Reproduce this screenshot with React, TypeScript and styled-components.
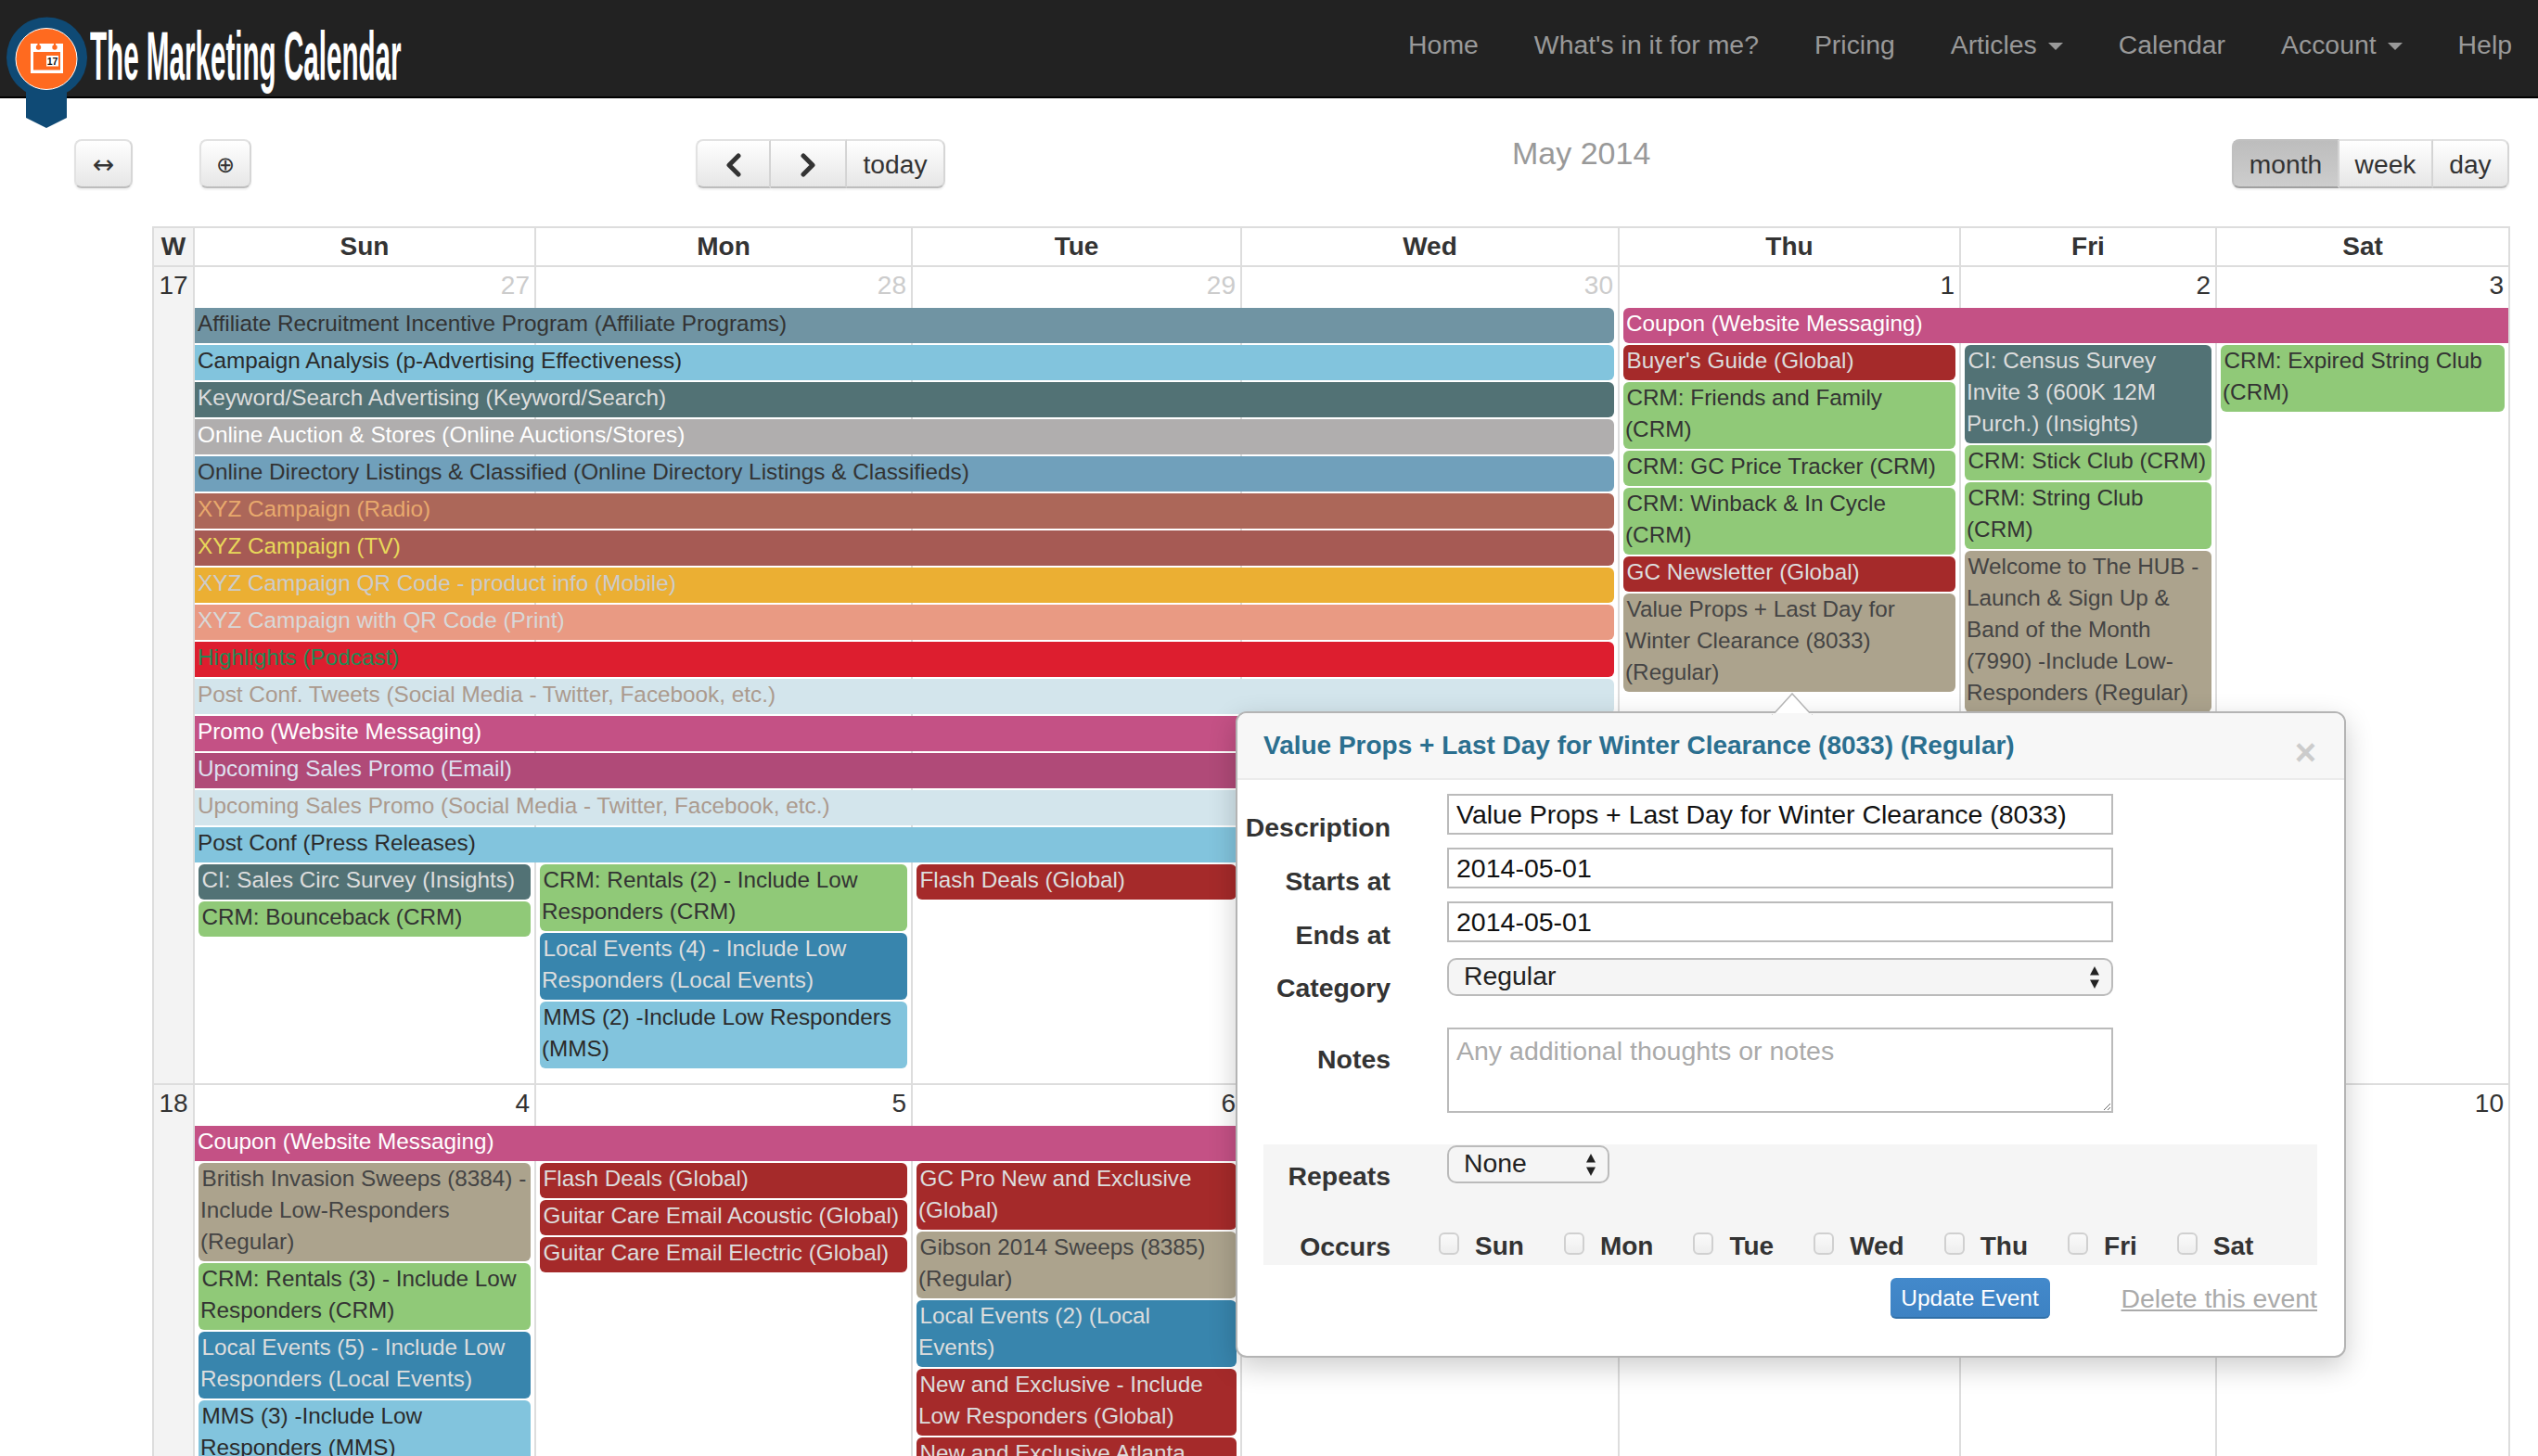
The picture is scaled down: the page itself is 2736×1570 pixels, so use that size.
import React from "react";
import styled, { createGlobalStyle, css } from "styled-components";

const GlobalStyle = createGlobalStyle`
  html, body {
    margin: 0;
    padding: 0;
    background: #fff;
  }
  body {
    font-family: "Liberation Sans", Arial, sans-serif;
    font-size: 28px;
    color: #333;
  }
`;

const COLUMNS = "44px 368px 406px 355px 407px 368px 276px 316px";

const KINDS = {
  affiliate: { bg: "#7094a3", fg: "#333" },
  analysis: { bg: "#82c4dd", fg: "#2b2b2b" },
  insights: { bg: "#527275", fg: "#ddd" },
  auction: { bg: "#b0aeae", fg: "#fff" },
  directory: { bg: "#70a0bb", fg: "#333" },
  radio: { bg: "#ac6759", fg: "#e8a96d" },
  tv: { bg: "#a65a54", fg: "#e8d85a" },
  mobile: { bg: "#ebaf33", fg: "#ccc" },
  print: { bg: "#e99a83", fg: "#d8d8d8" },
  podcast: { bg: "#dd1e2f", fg: "#1e8a55" },
  social: { bg: "#d3e5ec", fg: "#ab9a8e" },
  website: { bg: "#c45185", fg: "#fff" },
  email: { bg: "#b04a78", fg: "#dde0f0" },
  crm: { bg: "#90c978", fg: "#333" },
  global: { bg: "#a52a2a", fg: "#ddd" },
  local: { bg: "#3885ad", fg: "#ddd" },
  regular: { bg: "#aca38d", fg: "#444" },
};

type Kind = keyof typeof KINDS;
type Item = [string, Kind];

const Page = styled.div`
  position: relative;
  height: 1570px;
  overflow: hidden;
`;

const Header = styled.header`
  display: flex;
  justify-content: space-between;
  height: 104px;
  background: #222;
  border-bottom: 2px solid #000;
`;

const LogoBadge = styled.svg`
  position: absolute;
  left: 0;
  top: 0;
`;

const Brand = styled.div`
  width: 340px;
  margin-left: 97px;
  padding-top: 24px;
`;

const BrandName = styled.span`
  display: inline-block;
  font-size: 74px;
  line-height: 74px;
  font-weight: bold;
  color: #fff;
  white-space: nowrap;
  transform: scaleX(0.4);
  transform-origin: left center;
`;

const Nav = styled.nav`
  display: flex;
  align-items: flex-start;
  padding-top: 28px;
  margin-right: -2px;
`;

const NavLink = styled.a`
  display: flex;
  align-items: center;
  padding: 0 30px;
  font-size: 28.4px;
  line-height: 40px;
  color: #999;
`;

const Caret = styled.span`
  width: 0;
  height: 0;
  margin-left: 12px;
  margin-top: 4px;
  border-left: 8px solid transparent;
  border-right: 8px solid transparent;
  border-top: 8px solid #999;
`;

const Toolbar = styled.div`
  display: flex;
  align-items: flex-start;
  height: 138px;
  padding: 44px 31px 0 80px;
  box-sizing: border-box;
`;

const ButtonGroup = styled.div<{ $left?: number }>`
  display: flex;
  margin-left: ${(p) => p.$left ?? 0}px;
`;

const ToolButton = styled.button<{ $width: number; $active?: boolean; $pos?: "first" | "last" | "only" }>`
  display: flex;
  align-items: center;
  justify-content: center;
  width: ${(p) => p.$width}px;
  height: 53px;
  padding: 2px 0 0;
  box-sizing: border-box;
  font-family: inherit;
  font-size: 28.2px;
  color: #333;
  background: ${(p) =>
    p.$active ? "linear-gradient(#bdbdbd, #cdcdcd)" : "linear-gradient(#ffffff, #e6e6e6)"};
  border: 2px solid ${(p) => (p.$active ? "#c0c0c0" : "#e2e2e2")};
  border-left-width: ${(p) => (p.$pos === "last" || !p.$pos ? 0 : 2)}px;
  border-bottom-color: ${(p) => (p.$active ? "#a0a0a0" : "#bdbdbd")};
  border-right-color: #d6d6d6;
  box-shadow: 0 2px 2px rgba(0, 0, 0, 0.06);
  border-radius: ${(p) =>
    p.$pos === "only"
      ? "8px"
      : p.$pos === "first"
        ? "8px 0 0 8px"
        : p.$pos === "last"
          ? "0 8px 8px 0"
          : "0"};
`;

const Glyph = styled.span<{ $size: number }>`
  font-family: "DejaVu Sans", sans-serif;
  font-size: ${(p) => p.$size}px;
  line-height: 1;
`;

const MonthTitle = styled.h2`
  margin: -9px 0 0 611px;
  font-size: 34px;
  line-height: 48px;
  font-weight: normal;
  color: #999;
`;

const Spacer = styled.div`
  flex: 1;
`;

const Calendar = styled.div`
  width: 2540px;
  margin-left: 164px;
  border-top: 2px solid #ddd;
  border-left: 2px solid #ddd;
`;

const HeadRow = styled.div`
  display: grid;
  grid-template-columns: ${COLUMNS};
  height: 40px;
  border-bottom: 2px solid #ddd;
`;

const HeadCell = styled.div<{ $week?: boolean }>`
  box-sizing: border-box;
  border-right: 2px solid #ddd;
  background: ${(p) => (p.$week ? "#f3f3f3" : "#fff")};
  text-align: center;
  font-weight: bold;
  line-height: 40px;
`;

const Week = styled.div<{ $height: number; $bars: number }>`
  display: grid;
  grid-template-columns: ${COLUMNS};
  grid-template-rows: 44px repeat(${(p) => p.$bars}, 40px) 1fr;
  height: ${(p) => p.$height}px;
  box-sizing: border-box;
  border-bottom: 2px solid #ddd;
`;

const WeekNumber = styled.div`
  grid-column: 1;
  grid-row: 1 / -1;
  box-sizing: border-box;
  border-right: 2px solid #ddd;
  background: #f3f3f3;
  text-align: center;
  line-height: 40px;
`;

const DayCell = styled.div<{ $col: number; $muted?: boolean }>`
  grid-column: ${(p) => p.$col};
  grid-row: 1 / -1;
  box-sizing: border-box;
  border-right: 2px solid #ddd;
  padding-right: 5px;
  text-align: right;
  line-height: 40px;
  color: ${(p) => (p.$muted ? "#ccc" : "#333")};
`;

const Event = styled.div<{ $kind: Kind }>`
  box-sizing: border-box;
  padding: 0 1px 4px 2px;
  font-size: 24.3px;
  line-height: 34px;
  text-indent: 1.5px;
  background: ${(p) => KINDS[p.$kind].bg};
  color: ${(p) => KINDS[p.$kind].fg};
  border-radius: 6px;
`;

const Bar = styled(Event)<{ $from: number; $to: number; $row: number; $openLeft?: boolean; $openRight?: boolean }>`
  grid-column: ${(p) => p.$from} / ${(p) => p.$to};
  grid-row: ${(p) => p.$row};
  height: 38px;
  white-space: nowrap;
  text-indent: 1px;
  margin-left: ${(p) => (p.$openLeft ? 0 : 4)}px;
  margin-right: ${(p) => (p.$openRight ? 2 : 6)}px;
  border-radius: ${(p) =>
    p.$openLeft ? "0 6px 6px 0" : p.$openRight ? "6px 0 0 6px" : "6px"};
`;

const DayStack = styled.div<{ $col: number; $row: number; $tight?: boolean }>`
  grid-column: ${(p) => p.$col};
  grid-row: ${(p) => p.$row} / -1;
  display: flex;
  flex-direction: column;
  gap: 2px;
  padding: 0 6px 0 4px;
  min-width: 0;
  ${(p) =>
    p.$tight &&
    css`
      ${Event} {
        padding-right: 8px;
      }
    `}
`;

const Popover = styled.section`
  position: absolute;
  left: 1332px;
  top: 767px;
  width: 1197px;
  height: 697px;
  box-sizing: border-box;
  background: #fff;
  border: 2px solid #b4b4b4;
  border-radius: 12px;
  box-shadow: 0 10px 30px rgba(0, 0, 0, 0.2);
`;

const PopArrow = styled.svg`
  position: absolute;
  left: 575px;
  top: -22px;
`;

const PopHeader = styled.div`
  display: flex;
  justify-content: space-between;
  height: 70px;
  padding: 0 30px 0 28px;
  background: #f7f7f7;
  border-bottom: 2px solid #ebebeb;
  border-radius: 10px 10px 0 0;
`;

const PopTitle = styled.h3`
  margin: 0;
  font-size: 28px;
  line-height: 70px;
  font-weight: bold;
  color: #2b6f8f;
`;

const CloseMark = styled.span`
  margin-top: 22px;
  font-size: 40px;
  line-height: 40px;
  font-weight: bold;
  color: #ccc;
`;

const PopBody = styled.form`
  padding-top: 15px;
`;

const FormRow = styled.div<{ $gap?: number; $height: number }>`
  display: grid;
  grid-template-columns: 165px 718px;
  column-gap: 61px;
  height: ${(p) => p.$height}px;
  margin-top: ${(p) => p.$gap ?? 0}px;
`;

const FieldLabel = styled.label<{ $offset: number }>`
  padding-top: ${(p) => p.$offset}px;
  text-align: right;
  font-size: 28.4px;
  font-weight: bold;
  line-height: 40px;
  color: #333;
`;

const TextField = styled.input`
  width: 718px;
  height: 44px;
  box-sizing: border-box;
  padding: 0 8px;
  border: 2px solid #bbb;
  border-radius: 0;
  font-family: inherit;
  font-size: 28.5px;
  color: #111;
  outline: none;
`;

const NotesField = styled.textarea`
  display: block;
  width: 718px;
  height: 92px;
  box-sizing: border-box;
  padding: 7px 8px;
  border: 2px solid #bbb;
  border-radius: 0;
  font-family: inherit;
  font-size: 28.5px;
  line-height: 32px;
  color: #111;
  outline: none;
  &::placeholder {
    color: #aaa;
  }
`;

const SelectWrap = styled.div<{ $width: number }>`
  position: relative;
  width: ${(p) => p.$width}px;
  height: 41px;
`;

const SelectBox = styled.select`
  display: block;
  width: 100%;
  height: 100%;
  box-sizing: border-box;
  padding: 0 0 3px 16px;
  appearance: none;
  background: #f5f5f5;
  border: 2px solid #bbb;
  border-radius: 10px;
  font-family: inherit;
  font-size: 28.4px;
  color: #222;
  outline: none;
`;

const SelectArrows = styled.svg`
  position: absolute;
  right: 13px;
  top: 8px;
  pointer-events: none;
`;

const RepeatBlock = styled.div`
  width: 1136px;
  height: 130px;
  margin: 34px 0 0 28px;
  padding-top: 1px;
  box-sizing: border-box;
  background: #f5f5f5;
`;

const RepeatRow = styled.div`
  display: grid;
  grid-template-columns: 137px auto;
  column-gap: 61px;
  justify-content: start;
  height: 41px;
`;

const OccursRow = styled.div`
  display: flex;
  align-items: center;
  margin-top: 47px;
`;

const OccursLabel = styled.span`
  width: 137px;
  margin-right: 52px;
  text-align: right;
  font-size: 28.4px;
  font-weight: bold;
  line-height: 40px;
`;

const DayOptions = styled.div`
  display: flex;
  gap: 43px;
`;

const DayOption = styled.label`
  display: flex;
  align-items: center;
  gap: 17px;
  font-weight: bold;
  line-height: 42px;
`;

const DayCheck = styled.input`
  appearance: none;
  width: 22px;
  height: 24px;
  margin: -6px 0 0;
  background: linear-gradient(#fafafa, #eee);
  border: 2px solid #d0d0d0;
  border-radius: 6px;
`;

const PopFooter = styled.div`
  display: flex;
  justify-content: flex-end;
  align-items: center;
  gap: 77px;
  margin: 14px 29px 0 0;
`;

const UpdateButton = styled.button`
  width: 172px;
  height: 44px;
  padding: 2px 0 0;
  background: linear-gradient(#4389cb, #3d82c3);
  border: 0;
  border-bottom: 2px solid #2f6fa8;
  border-radius: 6px;
  font-family: inherit;
  font-size: 24.5px;
  color: #fff;
`;

const DeleteLink = styled.a`
  font-size: 28.4px;
  color: #aaa;
  text-decoration: underline;
`;

const NAV: [string, boolean][] = [
  ["Home", false],
  ["What's in it for me?", false],
  ["Pricing", false],
  ["Articles", true],
  ["Calendar", false],
  ["Account", true],
  ["Help", false],
];

const DAYS = ["Sun", "Mon", "Tue", "Wed", "Thu", "Fri", "Sat"];

const FIRST_BARS: Item[] = [
  ["Affiliate Recruitment Incentive Program (Affiliate Programs)", "affiliate"],
  ["Campaign Analysis (p-Advertising Effectiveness)", "analysis"],
  ["Keyword/Search Advertising (Keyword/Search)", "insights"],
  ["Online Auction & Stores (Online Auctions/Stores)", "auction"],
  ["Online Directory Listings & Classified (Online Directory Listings & Classifieds)", "directory"],
  ["XYZ Campaign (Radio)", "radio"],
  ["XYZ Campaign (TV)", "tv"],
  ["XYZ Campaign QR Code - product info (Mobile)", "mobile"],
  ["XYZ Campaign with QR Code (Print)", "print"],
  ["Highlights (Podcast)", "podcast"],
  ["Post Conf. Tweets (Social Media - Twitter, Facebook, etc.)", "social"],
  ["Promo (Website Messaging)", "website"],
  ["Upcoming Sales Promo (Email)", "email"],
  ["Upcoming Sales Promo (Social Media - Twitter, Facebook, etc.)", "social"],
  ["Post Conf (Press Releases)", "analysis"],
];

const FIRST_STACKS: { col: number; row: number; tight?: boolean; items: Item[] }[] = [
  {
    col: 2,
    row: 17,
    items: [
      ["CI: Sales Circ Survey (Insights)", "insights"],
      ["CRM: Bounceback (CRM)", "crm"],
    ],
  },
  {
    col: 3,
    row: 17,
    items: [
      ["CRM: Rentals (2) - Include Low Responders (CRM)", "crm"],
      ["Local Events (4) - Include Low Responders (Local Events)", "local"],
      ["MMS (2) -Include Low Responders (MMS)", "analysis"],
    ],
  },
  { col: 4, row: 17, items: [["Flash Deals (Global)", "global"]] },
  {
    col: 6,
    row: 3,
    tight: true,
    items: [
      ["Buyer's Guide (Global)", "global"],
      ["CRM: Friends and Family (CRM)", "crm"],
      ["CRM: GC Price Tracker (CRM)", "crm"],
      ["CRM: Winback & In Cycle (CRM)", "crm"],
      ["GC Newsletter (Global)", "global"],
      ["Value Props + Last Day for Winter Clearance (8033) (Regular)", "regular"],
    ],
  },
  {
    col: 7,
    row: 3,
    items: [
      ["CI: Census Survey Invite 3 (600K 12M Purch.) (Insights)", "insights"],
      ["CRM: Stick Club (CRM)", "crm"],
      ["CRM: String Club (CRM)", "crm"],
      ["Welcome to The HUB - Launch & Sign Up & Band of the Month (7990) -Include Low-Responders (Regular)", "regular"],
    ],
  },
  { col: 8, row: 3, items: [["CRM: Expired String Club (CRM)", "crm"]] },
];

const SECOND_STACKS: { col: number; tight?: boolean; items: Item[] }[] = [
  {
    col: 2,
    items: [
      ["British Invasion Sweeps (8384) - Include Low-Responders (Regular)", "regular"],
      ["CRM: Rentals (3) - Include Low Responders (CRM)", "crm"],
      ["Local Events (5) - Include Low Responders (Local Events)", "local"],
      ["MMS (3) -Include Low Responders (MMS)", "analysis"],
    ],
  },
  {
    col: 3,
    items: [
      ["Flash Deals (Global)", "global"],
      ["Guitar Care Email Acoustic (Global)", "global"],
      ["Guitar Care Email Electric (Global)", "global"],
    ],
  },
  {
    col: 4,
    tight: true,
    items: [
      ["GC Pro New and Exclusive (Global)", "global"],
      ["Gibson 2014 Sweeps (8385) (Regular)", "regular"],
      ["Local Events (2) (Local Events)", "local"],
      ["New and Exclusive - Include Low Responders (Global)", "global"],
      ["New and Exclusive Atlanta (Global)", "global"],
    ],
  },
];

function Logo() {
  return (
    <LogoBadge width="100" height="140" viewBox="0 0 100 140">
      <circle cx="50.5" cy="62" r="43.5" fill="#0f4a75" />
      <path d="M28 90V127L50 138L72 127V90Z" fill="#0f4a75" />
      <circle cx="50" cy="63.5" r="33" fill="#ff6a1f" stroke="#fff" strokeWidth="1" />
      <rect x="33" y="47" width="35" height="32" fill="#fff" />
      <rect x="36" y="56" width="29" height="19.5" fill="#ff6a1f" />
      <rect x="50" y="60" width="13" height="11.5" fill="#fff" />
      <path d="M41.5 47v3M59 47v3" stroke="#ff6a1f" strokeWidth="2" />
      <circle cx="41.5" cy="51" r="2.7" fill="#ff6a1f" />
      <circle cx="59" cy="51" r="2.7" fill="#ff6a1f" />
      <text x="56.5" y="70" textAnchor="middle" fontFamily="Liberation Sans" fontWeight="bold" fontSize="10.5" fill="#111">
        17
      </text>
    </LogoBadge>
  );
}

function Arrows() {
  return (
    <SelectArrows width="14" height="26" viewBox="0 0 14 26">
      <path d="M7 1L12 10.5H2Z" fill="#222" />
      <path d="M7 25L12 15.5H2Z" fill="#222" />
    </SelectArrows>
  );
}

function Chevron({ flip }: { flip?: boolean }) {
  return (
    <svg width="20" height="26" viewBox="0 0 20 26">
      <polyline
        points={flip ? "5,3 15,13 5,23" : "15,3 5,13 15,23"}
        fill="none"
        stroke="#333"
        strokeWidth="5"
        strokeLinecap="round"
        strokeLinejoin="round"
      />
    </svg>
  );
}

export default function App() {
  return (
    <Page>
      <GlobalStyle />
      <Header>
        <Brand>
          <BrandName>The Marketing Calendar</BrandName>
        </Brand>
        <Nav>
          {NAV.map(([label, hasMenu]) => (
            <NavLink key={label}>
              {label}
              {hasMenu && <Caret />}
            </NavLink>
          ))}
        </Nav>
      </Header>
      <Logo />

      <Toolbar>
        <ToolButton $width={63} $pos="only">
          <Glyph $size={28}>↔</Glyph>
        </ToolButton>
        <ButtonGroup $left={72}>
          <ToolButton $width={56} $pos="only">
            <Glyph $size={24}>⊕</Glyph>
          </ToolButton>
        </ButtonGroup>
        <ButtonGroup $left={479}>
          <ToolButton $width={81} $pos="first">
            <Chevron />
          </ToolButton>
          <ToolButton $width={82}>
            <Chevron flip />
          </ToolButton>
          <ToolButton $width={106} $pos="last">
            today
          </ToolButton>
        </ButtonGroup>
        <MonthTitle>May 2014</MonthTitle>
        <Spacer />
        <ButtonGroup>
          <ToolButton $width={116} $pos="first" $active>
            month
          </ToolButton>
          <ToolButton $width={101}>week</ToolButton>
          <ToolButton $width={82} $pos="last">
            day
          </ToolButton>
        </ButtonGroup>
      </Toolbar>

      <Calendar>
        <HeadRow>
          <HeadCell $week>W</HeadCell>
          {DAYS.map((day) => (
            <HeadCell key={day}>{day}</HeadCell>
          ))}
        </HeadRow>

        <Week $height={882} $bars={15}>
          <WeekNumber>17</WeekNumber>
          {[27, 28, 29, 30].map((n, i) => (
            <DayCell key={n} $col={i + 2} $muted>
              {n}
            </DayCell>
          ))}
          {[1, 2, 3].map((n, i) => (
            <DayCell key={n} $col={i + 6}>
              {n}
            </DayCell>
          ))}
          {FIRST_BARS.map(([label, kind], i) => (
            <Bar key={label} $kind={kind} $from={2} $to={6} $row={i + 2} $openLeft>
              {label}
            </Bar>
          ))}
          <Bar $kind="website" $from={6} $to={9} $row={2} $openRight>
            Coupon (Website Messaging)
          </Bar>
          {FIRST_STACKS.map((stack) => (
            <DayStack key={stack.col} $col={stack.col} $row={stack.row} $tight={stack.tight}>
              {stack.items.map(([label, kind]) => (
                <Event key={label} $kind={kind}>
                  {label}
                </Event>
              ))}
            </DayStack>
          ))}
        </Week>

        <Week $height={500} $bars={1}>
          <WeekNumber>18</WeekNumber>
          {[4, 5, 6, 7, 8, 9, 10].map((n, i) => (
            <DayCell key={n} $col={i + 2}>
              {n}
            </DayCell>
          ))}
          <Bar $kind="website" $from={2} $to={6} $row={2} $openLeft>
            Coupon (Website Messaging)
          </Bar>
          {SECOND_STACKS.map((stack) => (
            <DayStack key={stack.col} $col={stack.col} $row={3} $tight={stack.tight}>
              {stack.items.map(([label, kind]) => (
                <Event key={label} $kind={kind}>
                  {label}
                </Event>
              ))}
            </DayStack>
          ))}
        </Week>
      </Calendar>

      <Popover>
        <PopArrow width="46" height="24" viewBox="0 0 46 24">
          <path d="M2 24L23 1L44 24Z" fill="#fff" stroke="#b4b4b4" strokeWidth="1.5" />
          <rect x="2" y="22" width="42" height="2" fill="#f7f7f7" />
        </PopArrow>
        <PopHeader>
          <PopTitle>Value Props + Last Day for Winter Clearance (8033) (Regular)</PopTitle>
          <CloseMark>×</CloseMark>
        </PopHeader>
        <PopBody>
          <FormRow $height={44}>
            <FieldLabel $offset={16}>Description</FieldLabel>
            <TextField defaultValue="Value Props + Last Day for Winter Clearance (8033)" />
          </FormRow>
          <FormRow $height={44} $gap={14}>
            <FieldLabel $offset={16}>Starts at</FieldLabel>
            <TextField defaultValue="2014-05-01" />
          </FormRow>
          <FormRow $height={44} $gap={14}>
            <FieldLabel $offset={16}>Ends at</FieldLabel>
            <TextField defaultValue="2014-05-01" />
          </FormRow>
          <FormRow $height={41} $gap={17}>
            <FieldLabel $offset={12}>Category</FieldLabel>
            <SelectWrap $width={718}>
              <SelectBox defaultValue="Regular">
                <option>Regular</option>
              </SelectBox>
              <Arrows />
            </SelectWrap>
          </FormRow>
          <FormRow $height={92} $gap={34}>
            <FieldLabel $offset={14}>Notes</FieldLabel>
            <NotesField placeholder="Any additional thoughts or notes" />
          </FormRow>
          <RepeatBlock>
            <RepeatRow>
              <FieldLabel $offset={13}>Repeats</FieldLabel>
              <SelectWrap $width={175}>
                <SelectBox defaultValue="None">
                  <option>None</option>
                </SelectBox>
                <Arrows />
              </SelectWrap>
            </RepeatRow>
            <OccursRow>
              <OccursLabel>Occurs</OccursLabel>
              <DayOptions>
                {DAYS.map((day) => (
                  <DayOption key={day}>
                    <DayCheck type="checkbox" />
                    {day}
                  </DayOption>
                ))}
              </DayOptions>
            </OccursRow>
          </RepeatBlock>
          <PopFooter>
            <UpdateButton type="button">Update Event</UpdateButton>
            <DeleteLink>Delete this event</DeleteLink>
          </PopFooter>
        </PopBody>
      </Popover>
    </Page>
  );
}
